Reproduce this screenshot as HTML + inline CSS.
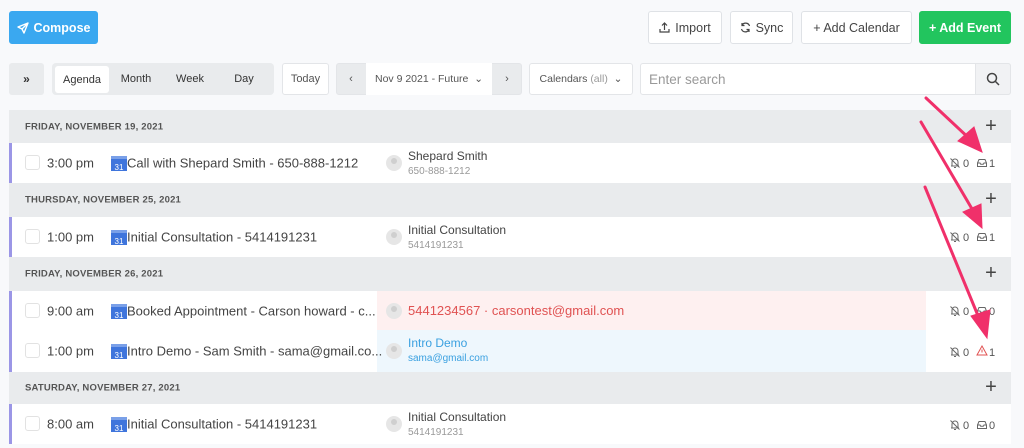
<!DOCTYPE html>
<html><head><meta charset="utf-8"><style>
*{box-sizing:border-box;margin:0;padding:0}
body{width:1024px;height:448px;background:#f8f9fb;font-family:"Liberation Sans",sans-serif;color:#333;position:relative;overflow:hidden}
.abs{position:absolute}
.btn{position:absolute;top:11px;height:33px;border:1px solid #dfe2e6;border-radius:3px;background:#fff;font-size:12.5px;color:#444;display:flex;align-items:center;justify-content:center;gap:5px}
.tb{position:absolute;top:63px;height:32px;font-size:11px;color:#333;display:flex;align-items:center;justify-content:center}
.hdr{position:absolute;left:9px;width:1002px;background:#e9ebed;font-size:9.5px;font-weight:bold;color:#555;letter-spacing:.2px}
.hdr span{position:absolute;left:16px;top:50%;transform:translateY(-50%)}
.hdr b{position:absolute;right:14px;top:50%;transform:translateY(-52%);font-size:20px;font-weight:normal;color:#444}
.row{position:absolute;left:9px;width:1002px;background:#fff;border-left:3px solid #9b96e6;font-size:13px;color:#444}
.cb{position:absolute;left:13px;top:50%;margin-top:-8px;width:15px;height:15px;border:1px solid #e2e2e2;border-radius:3px;background:#fff}
.time{position:absolute;left:35px;top:50%;transform:translateY(-50%)}
.ci{position:absolute;left:99px;top:50%;margin-top:-7px;width:16px;height:15px;background:#3f75dc;color:#fff;font-size:8px;text-align:center;line-height:17px;border-top:3px solid #7aa0e8}
.title{position:absolute;left:115px;top:50%;transform:translateY(-50%);white-space:nowrap}
.av{position:absolute;left:374px;top:50%;margin-top:-8px;width:16px;height:16px;border-radius:50%;background:#e6e6e6}
.av:after{content:"";position:absolute;left:5px;top:3px;width:6px;height:6px;border-radius:50%;background:#cfcfcf}
.nm{position:absolute;left:396px;top:6px;font-size:12px;color:#444}
.sub{position:absolute;left:396px;top:23px;font-size:10px;color:#999}
</style></head><body>
<div class="btn" style="left:9px;width:89px;background:#3aa8f0;border-color:#3aa8f0;color:#fff;font-weight:bold"><svg width="12" height="12" viewBox="0 0 12 12"><path d="M11 1L1 5l4 2 2 4z M5 7l6-6" fill="none" stroke="#fff" stroke-width="1.4" stroke-linejoin="round"/></svg>Compose</div>
<div class="btn" style="left:648px;width:74px"><svg width="11" height="11" viewBox="0 0 11 11"><path d="M5.5 8V1M3 3.5l2.5-2.5 2.5 2.5M1 7v3h9V7" fill="none" stroke="#444" stroke-width="1.2"/></svg>Import</div>
<div class="btn" style="left:730px;width:63px"><svg width="11" height="11" viewBox="0 0 11 11"><path d="M9.5 4A4 4 0 0 0 2 3.5M1.5 7A4 4 0 0 0 9 7.5M2 1v2.5h2.5M9 10V7.5H6.5" fill="none" stroke="#444" stroke-width="1.2"/></svg>Sync</div>
<div class="btn" style="left:801px;width:111px">+ Add Calendar</div>
<div class="btn" style="left:919px;width:92px;background:#22c55e;border-color:#22c55e;color:#fff;font-weight:bold">+ Add Event</div>

<div class="tb" style="left:9px;width:35px;background:#e9ebed;border-radius:3px;font-weight:bold;font-size:12px">»</div>
<div class="tb" style="left:52px;width:222px;background:#e9ebed;border-radius:4px"></div>
<div class="tb" style="left:55px;top:66px;height:27px;width:54px;background:#fff;border-radius:3px">Agenda</div>
<div class="tb" style="left:109px;width:54px">Month</div>
<div class="tb" style="left:163px;width:54px">Week</div>
<div class="tb" style="left:217px;width:54px">Day</div>
<div class="tb" style="left:282px;width:47px;background:#fff;border:1px solid #e3e5e8;border-radius:3px;color:#555">Today</div>
<div class="tb" style="left:336px;width:186px;background:#e9ebed;border:1px solid #e3e5e8;border-radius:3px"></div>
<div class="tb" style="left:336px;width:30px;color:#555">‹</div>
<div class="tb" style="left:366px;width:126px;background:#fff;color:#555;font-size:10.5px">Nov 9 2021 - Future&nbsp;&nbsp;⌄</div>
<div class="tb" style="left:492px;width:30px;color:#555">›</div>
<div class="tb" style="left:529px;width:104px;background:#fff;border:1px solid #e3e5e8;border-radius:3px;color:#555;font-size:10.5px">Calendars&nbsp;<span style="color:#999">(all)</span>&nbsp;&nbsp;⌄</div>
<div class="tb" style="left:640px;width:371px;background:#fff;border:1px solid #e3e5e8;border-radius:3px;justify-content:flex-start;padding-left:8px;font-size:13.5px;color:#999">Enter search</div>
<div class="tb" style="left:975px;width:36px;background:#f1f2f4;border:1px solid #e3e5e8;border-radius:0 3px 3px 0"><svg width="14" height="14" viewBox="0 0 14 14"><circle cx="6" cy="6" r="4.5" fill="none" stroke="#444" stroke-width="1.5"/><path d="M9.5 9.5L13 13" stroke="#444" stroke-width="1.5"/></svg></div>

<div class="hdr" style="top:110px;height:33px"><span>FRIDAY, NOVEMBER 19, 2021</span><b>+</b></div>
<div class="row" style="top:143px;height:40px"><div class="cb"></div><div class="time">3:00 pm</div><div class="ci">31</div><div class="title">Call with Shepard Smith - 650-888-1212</div><div class="av"></div><div class="nm">Shepard Smith</div><div class="sub">650-888-1212</div></div>
<div class="hdr" style="top:183px;height:34px"><span>THURSDAY, NOVEMBER 25, 2021</span><b>+</b></div>
<div class="row" style="top:217px;height:40px"><div class="cb"></div><div class="time">1:00 pm</div><div class="ci">31</div><div class="title">Initial Consultation - 5414191231</div><div class="av"></div><div class="nm">Initial Consultation</div><div class="sub">5414191231</div></div>
<div class="hdr" style="top:257px;height:34px"><span>FRIDAY, NOVEMBER 26, 2021</span><b>+</b></div>
<div class="row" style="top:291px;height:39px"><div class="abs" style="left:365px;top:0;width:549px;height:39px;background:#fef0f0"></div><div class="cb"></div><div class="time">9:00 am</div><div class="ci">31</div><div class="title">Booked Appointment - Carson howard - c...</div><div class="av"></div><div class="nm" style="top:12px;font-size:13px;color:#e05252">5441234567 · carsontest@gmail.com</div></div>
<div class="row" style="top:330px;height:42px"><div class="abs" style="left:365px;top:0;width:549px;height:42px;background:#eef7fd"></div><div class="cb"></div><div class="time">1:00 pm</div><div class="ci">31</div><div class="title">Intro Demo - Sam Smith - sama@gmail.co...</div><div class="av"></div><div class="nm" style="color:#3aa0e0">Intro Demo</div><div class="sub" style="color:#3aa0e0">sama@gmail.com</div></div>
<div class="hdr" style="top:372px;height:32px"><span>SATURDAY, NOVEMBER 27, 2021</span><b>+</b></div>
<div class="row" style="top:404px;height:40px"><div class="cb"></div><div class="time">8:00 am</div><div class="ci">31</div><div class="title">Initial Consultation - 5414191231</div><div class="av"></div><div class="nm">Initial Consultation</div><div class="sub">5414191231</div></div>

<svg class="abs" style="left:0;top:0" width="1024" height="448">
<defs>
<g id="bell"><path d="M-4 3h8M-3 3V-1a3 3 0 0 1 6 0v4M-1 4.5h2M-4.5-4.5l9 9" fill="none" stroke="#666" stroke-width="1"/></g>
<g id="inbox"><path d="M-4.5 0l1.5-3.5h6L4.5 0v3.5h-9zM-4.5 0h2.5l.7 1.2h2.6L2 0h2.5" fill="none" stroke="#666" stroke-width="1"/></g>
</defs>
<g font-family="Liberation Sans" font-size="11" fill="#555">
<use href="#bell" x="955" y="163"/><text x="963" y="167">0</text><use href="#inbox" x="982" y="163"/><text x="989" y="167">1</text>
<use href="#bell" x="955" y="237"/><text x="963" y="241">0</text><use href="#inbox" x="982" y="237"/><text x="989" y="241">1</text>
<use href="#bell" x="955" y="311"/><text x="963" y="315">0</text><use href="#inbox" x="982" y="311"/><text x="989" y="315">0</text>
<use href="#bell" x="955" y="352"/><text x="963" y="356">0</text><path d="M982 346l5 9h-10z M982 349.5v3" fill="none" stroke="#e05252" stroke-width="1"/><text x="989" y="356">1</text>
<use href="#bell" x="955" y="425"/><text x="963" y="429">0</text><use href="#inbox" x="982" y="425"/><text x="989" y="429">0</text>
</g>
<g stroke="#f0306a" stroke-width="3" stroke-linecap="round" fill="#f0306a">
<line x1="926" y1="98" x2="972" y2="141"/><polygon points="982,152 958,141 974,127" stroke-width="1"/>
<line x1="921" y1="122" x2="975" y2="214"/><polygon points="982,228 963,212 981,204" stroke-width="1"/>
<line x1="925" y1="187" x2="981" y2="323"/><polygon points="987,338 971,316 990,310" stroke-width="1"/>
</g>
</svg>
</body></html>
